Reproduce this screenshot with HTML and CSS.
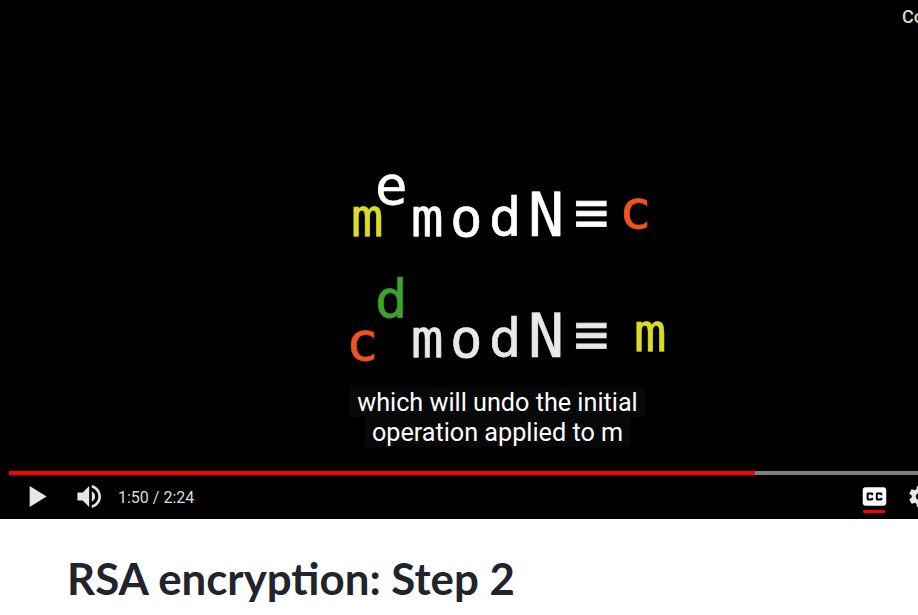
FILE: index.html
```html
<!DOCTYPE html>
<html lang="en">
<head>
  <meta charset="UTF-8">
  <meta name="viewport" content="width=device-width, initial-scale=1.0">
  <title>RSA encryption: Step 2</title>
  <link rel="stylesheet" href="styles.css">
</head>
<body>
  <section class="player">
    <div class="frame">
      <!-- video picture: glyphs sit on a free canvas -->
      <svg class="picture" width="918" height="471" viewBox="0 0 918 471">
        <defs>
          <filter id="soft"><feGaussianBlur stdDeviation="0.7"/></filter>
        </defs>
        <g class="eq" filter="url(#soft)">
          <text class="yellow" x="351" y="236">m</text>
          <text class="white" x="375" y="204">e</text>
          <text class="white spaced" x="411" y="236">mod<tspan class="cap">N</tspan></text>
          <text class="white bars" x="574" y="232">≡</text>
          <text class="red" x="619" y="228">c</text>

          <text class="red" x="346" y="360">c</text>
          <text class="green" x="375" y="318">d</text>
          <text class="grey spaced" x="411" y="357">mod<tspan class="cap">N</tspan></text>
          <text class="grey bars" x="574" y="354">≡</text>
          <text class="yellow" x="634" y="351">m</text>
        </g>
      </svg>
      <span class="corner-label">Co</span>
      <div class="captions">
        <span class="caption-line">which will undo the initial</span>
        <span class="caption-line">operation applied to m</span>
      </div>
    </div>

    <div class="progress">
      <div class="progress-played"></div>
      <div class="progress-rest"></div>
    </div>

    <div class="controls">
      <button class="ctrl ctrl-play" aria-label="Play">
        <svg viewBox="0 0 36 36"><path d="M12 26 18.5 22V14L12 10ZM18.5 22 25 18 18.5 14Z"/></svg>
      </button>
      <button class="ctrl ctrl-volume" aria-label="Mute">
        <svg viewBox="0 0 36 36"><path d="M8,21 L12,21 L17,26 L17,10 L12,15 L8,15 L8,21 Z M19,14 L19,22 C20.48,21.32 21.5,19.77 21.5,18 C21.5,16.26 20.48,14.74 19,14 Z M19,11.29 C21.89,12.15 24,14.83 24,18 C24,21.17 21.89,23.85 19,24.71 L19,26.77 C23.01,25.86 26,22.28 26,18 C26,13.72 23.01,10.14 19,9.23 L19,11.29 Z"/></svg>
      </button>
      <span class="time">1:50 / 2:24</span>
      <div class="spacer"></div>
      <button class="ctrl ctrl-cc" aria-label="Subtitles">
        <svg viewBox="0 0 36 36"><path fill-rule="evenodd" d="M11,11 C9.89,11 9,11.9 9,13 L9,23 C9,24.1 9.89,25 11,25 L25,25 C26.1,25 27,24.1 27,23 L27,13 C27,11.9 26.1,11 25,11 L11,11 Z M17,17 L15.5,17 L15.5,16.5 L13.5,16.5 L13.5,19.5 L15.5,19.5 L15.5,19 L17,19 L17,20 C17,20.55 16.55,21 16,21 L13,21 C12.45,21 12,20.55 12,20 L12,16 C12,15.45 12.45,15 13,15 L16,15 C16.55,15 17,15.45 17,16 L17,17 Z M24,17 L22.5,17 L22.5,16.5 L20.5,16.5 L20.5,19.5 L22.5,19.5 L22.5,19 L24,19 L24,20 C24,20.55 23.55,21 23,21 L20,21 C19.45,21 19,20.55 19,20 L19,16 C19,15.45 19.45,15 20,15 L23,15 C23.55,15 24,15.45 24,16 L24,17 Z"/></svg>
      </button>
      <button class="ctrl ctrl-gear" aria-label="Settings">
        <svg viewBox="0 0 36 36"><path d="m 23.94,18.78 c .03,-0.25 .05,-0.51 .05,-0.78 0,-0.27 -0.02,-0.52 -0.05,-0.78 l 1.68,-1.32 c .15,-0.12 .19,-0.33 .09,-0.51 l -1.6,-2.76 c -0.09,-0.17 -0.31,-0.24 -0.48,-0.17 l -1.99,.8 c -0.41,-0.32 -0.86,-0.58 -1.35,-0.78 l -0.30,-2.12 c -0.02,-0.19 -0.19,-0.33 -0.39,-0.33 l -3.2,0 c -0.2,0 -0.36,.14 -0.39,.33 l -0.30,2.12 c -0.48,.2 -0.93,.47 -1.35,.78 l -1.99,-0.8 c -0.18,-0.07 -0.39,0 -0.48,.17 l -1.6,2.76 c -0.10,.17 -0.05,.39 .09,.51 l 1.68,1.32 c -0.03,.25 -0.05,.52 -0.05,.78 0,.26 .02,.52 .05,.78 l -1.68,1.32 c -0.15,.12 -0.19,.33 -0.09,.51 l 1.6,2.76 c .09,.17 .31,.24 .48,.17 l 1.99,-0.8 c .41,.32 .86,.58 1.35,.78 l .30,2.12 c .02,.19 .19,.33 .39,.33 l 3.2,0 c .2,0 .36,-0.14 .39,-0.33 l .30,-2.12 c .48,-0.2 .93,-0.47 1.35,-0.78 l 1.99,.8 c .18,.07 .39,0 .48,-0.17 l 1.6,-2.76 c .09,-0.17 .05,-0.39 -0.09,-0.51 l -1.68,-1.32 0,0 z m -5.94,2.01 c -1.54,0 -2.8,-1.25 -2.8,-2.8 0,-1.54 1.25,-2.8 2.8,-2.8 1.54,0 2.8,1.25 2.8,2.8 0,1.54 -1.25,2.8 -2.8,2.8 l 0,0 z"/></svg>
      </button>
    </div>
  </section>

  <h1 class="title">RSA encryption: Step 2</h1>
</body>
</html>
```

FILE: styles.css
```css
html, body {
    margin: 0;
    padding: 0;
    height: 100%;
    overflow: hidden;
    background: #fff;
}

.player {
    height: 519px;
    background: #000;
    display: flex;
    flex-direction: column;
    overflow: hidden;
}

.frame {
    position: relative;
    height: 471px;
    flex-shrink: 0;
}

.picture {
    display: block;
}

.eq text {
    font-family: "DejaVu Sans Mono", monospace;
    font-size: 54px;
    stroke-width: 0.6px;
}

.eq .spaced {
    letter-spacing: 6.5px;
}

.eq .cap {
    font-size: 60px;
}

.eq .bars {
    font-size: 58px;
}

.white { fill: #fff; stroke: #fff; }
.grey { fill: #e8e8e8; stroke: #e8e8e8; }
.yellow { fill: #dcdc22; stroke: #dcdc22; }
.red { fill: #f0521e; stroke: #f0521e; }
.green { fill: #3aa52a; stroke: #3aa52a; }

.corner-label {
    position: absolute;
    top: 6px;
    left: 902px;
    font-family: Roboto, sans-serif;
    font-size: 18px;
    font-weight: 500;
    color: #d8d8d8;
}

.captions {
    position: absolute;
    top: 387px;
    left: 0;
    right: 0;
    padding-left: 77px;
    display: flex;
    flex-direction: column;
    align-items: center;
}

.caption-line {
    padding: 2px 7px 0;
    background: #080808;
    color: #fff;
    font-family: Roboto, sans-serif;
    font-size: 25.2px;
    line-height: 28px;
}

.progress {
    display: flex;
    height: 4px;
    margin-left: 9px;
    flex-shrink: 0;
}

.progress-played {
    width: 746px;
    background: #f00;
}

.progress-rest {
    flex: 1;
    background: #808080;
}

.controls {
    display: flex;
    align-items: center;
    height: 44px;
    padding-left: 14px;
}

.ctrl {
    position: relative;
    width: 47px;
    height: 44px;
    padding: 0;
    border: none;
    background: none;
    flex-shrink: 0;
}

.ctrl svg {
    display: block;
    width: 47px;
    height: 47px;
    margin-top: -2px;
    fill: #e6e6e6;
}

.ctrl-volume {
    margin-left: 6px;
}

.time {
    margin-left: 4px;
    font-family: Roboto, sans-serif;
    font-size: 16px;
    color: #ddd;
}

.spacer {
    flex: 1;
}

.ctrl-cc svg {
    fill: #fff;
}

.ctrl-cc::after {
    content: "";
    position: absolute;
    left: 12px;
    bottom: 6px;
    width: 22px;
    height: 3px;
    background: #f00;
    border-radius: 1px;
}

.ctrl-gear {
    margin-left: -2px;
    margin-right: -25px;
}

.title {
    margin: 33px 0 0 67px;
    font-family: Lato, sans-serif;
    font-size: 43.8px;
    font-weight: 700;
    line-height: 52px;
    color: #21242c;
}
```
